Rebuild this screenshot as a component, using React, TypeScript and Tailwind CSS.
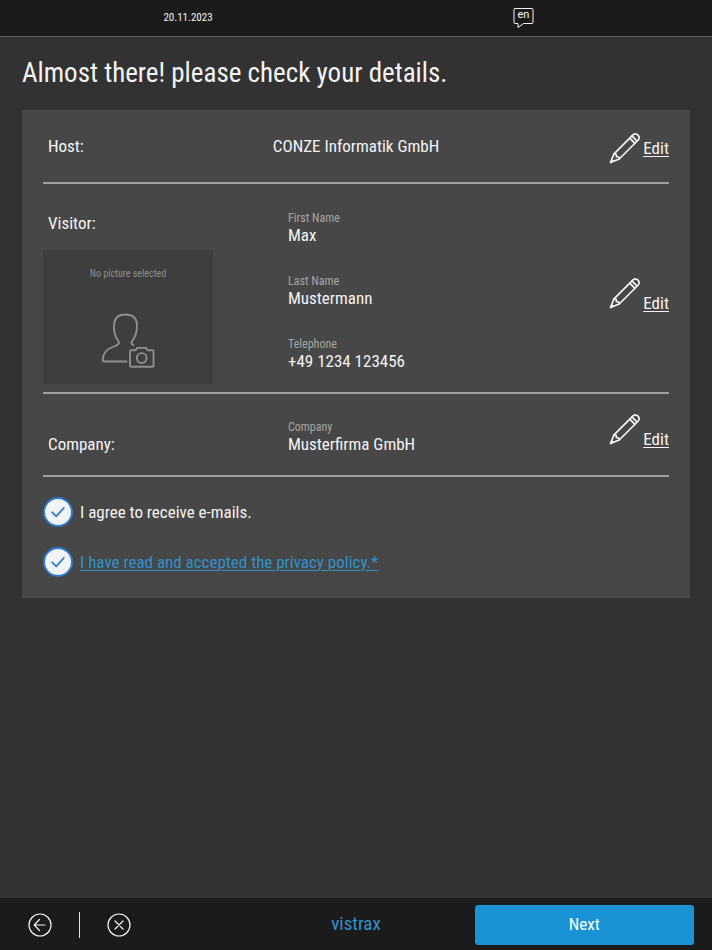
import { useState, type ReactNode } from "react";
import clsx from "clsx";

type Field = {
  label: string;
  value: string;
};

const visitorFields: Field[] = [
  { label: "First Name", value: "Max" },
  { label: "Last Name", value: "Mustermann" },
  { label: "Telephone", value: "+49 1234 123456" },
];

function PencilIcon() {
  return (
    <svg
      className="h-8 w-8"
      viewBox="0 0 32 32"
      fill="none"
      stroke="currentColor"
      strokeWidth="1.7"
      strokeLinejoin="round"
      strokeLinecap="round"
      aria-hidden="true"
    >
      <path d="M1.600 30.400 5 21.800 24 2.800a3.700 3.700 0 0 1 5.200 5.200L10.200 27z" />
      <path d="M5 21.800c2.700 0 2.400 1.500 2.400 2.800 1.300 0 2.800-.3 2.800 2.400M20.700 6.100l5.200 5.200M22.900 3.900l5.200 5.200M1.600 30.400l1.800-1.800" />
    </svg>
  );
}

function PersonCameraIcon() {
  return (
    <svg
      className="h-14 w-14"
      viewBox="0 0 56 56"
      fill="none"
      stroke="currentColor"
      strokeWidth="1.9"
      strokeLinejoin="round"
      strokeLinecap="round"
      aria-hidden="true"
    >
      <path d="M26.500 49.500H4.500c-1.200 0-1.900-.7-1.800-1.900.5-7.800 4.800-10.800 11-12.900 3.800-1.300 5.300-2.300 5.300-4.700-3.300-4-5-9.500-5-15.500C14 6.500 18 2.500 25.500 2.500S37 6.500 37 14c0 6-1.800 11.400-5.300 15.500-.5 2 .2 3 1.800 3.700" />
      <path d="M31 38.300h4.500l1.600-2.400h8.800l1.600 2.400h5a1 1 0 0 1 1 1v14.500a1 1 0 0 1-1 1H31a1 1 0 0 1-1-1V39.300a1 1 0 0 1 1-1z" />
      <circle cx="41.700" cy="46" r="4.900" />
    </svg>
  );
}

function EditButton({ compact = false }: { compact?: boolean }) {
  return (
    <button
      type="button"
      className={clsx(
        "flex cursor-pointer gap-0.5 justify-self-end",
        compact ? "items-center" : "items-start pb-[5px]",
      )}
    >
      <PencilIcon />
      <span
        className={clsx(
          "text-[17px] leading-5 underline decoration-1 underline-offset-2",
          !compact && "pt-4",
        )}
      >
        Edit
      </span>
    </button>
  );
}

function FieldItem({ label, value }: Field) {
  return (
    <div>
      <dt className="text-xs leading-[14px] text-[#a5a5a5]">{label}</dt>
      <dd className="text-[17px] leading-5">{value}</dd>
    </div>
  );
}

function Consent({ id, children }: { id: string; children: ReactNode }) {
  const [checked, setChecked] = useState(true);

  return (
    <div className="flex items-center gap-[7px]">
      <div className="grid place-items-center *:col-start-1 *:row-start-1">
        <input
          id={id}
          type="checkbox"
          checked={checked}
          onChange={(e) => setChecked(e.target.checked)}
          className="h-[30px] w-[30px] appearance-none rounded-full border-2 border-[#2d7ad2] bg-[#f2f3f5]"
        />
        {checked && (
          <svg
            className="pointer-events-none h-4 w-4"
            viewBox="0 0 16 16"
            fill="none"
            stroke="#2d7ad2"
            strokeWidth="1.8"
            strokeLinecap="round"
            strokeLinejoin="round"
            aria-hidden="true"
          >
            <path d="m2.200 8.300 4 4 7.600-8.300" />
          </svg>
        )}
      </div>
      <label htmlFor={id} className="text-[17px] leading-5">
        {children}
      </label>
    </div>
  );
}

export default function App() {
  return (
    <div className="flex min-h-screen flex-col bg-[#323232] font-['Roboto_Condensed',Roboto,sans-serif] text-[#f4f4f4]">
      {/* Top bar */}
      <header className="grid h-[37px] grid-cols-2 items-center border-b border-[#606060] bg-[#1b1b1b] px-5">
        <time dateTime="2023-11-20" className="text-center text-[11px]">
          20.11.2023
        </time>
        <button
          type="button"
          aria-label="Language: en"
          className="cursor-pointer justify-self-center"
        >
          <svg className="h-6 w-6" viewBox="0 0 24 24" aria-hidden="true">
            <path
              d="M3 2.500h17a1 1 0 0 1 1 1v13a1 1 0 0 1-1 1h-8.500l-5.500 4v-4H3a1 1 0 0 1-1-1v-13a1 1 0 0 1 1-1z"
              fill="none"
              stroke="currentColor"
              strokeLinejoin="round"
            />
            <text
              x="11.500"
              y="12"
              textAnchor="middle"
              fill="currentColor"
              className="font-['Roboto',sans-serif] text-[11px]"
            >
              en
            </text>
          </svg>
        </button>
      </header>

      <main className="flex-1 px-[22px] pt-5">
        <h1 className="text-[27px] leading-8">
          Almost there! please check your details.
        </h1>

        <div className="mt-[21px] bg-[#474747] px-[21px] pb-[21px]">
          {/* Host */}
          <section className="grid grid-cols-[1fr_auto_1fr] items-start border-b-2 border-[#a0a0a0] pt-[22px] pb-[18px]">
            <h2 className="pt-1 pl-[5px] text-[17px] leading-5">Host:</h2>
            <p className="pt-1 text-[17px] leading-5">CONZE Informatik GmbH</p>
            <EditButton compact />
          </section>

          {/* Visitor */}
          <section className="grid grid-cols-[245px_1fr_auto] items-center border-b-2 border-[#a0a0a0] pt-[27px] pb-2">
            <div>
              <h2 className="pl-[5px] text-[17px] leading-6">Visitor:</h2>
              <div className="mt-[15px] flex h-[134px] w-[170px] flex-col items-center justify-between bg-[#3e3e3e] py-4 text-[#8f8f8f]">
                <p className="text-[10px] leading-4">No picture selected</p>
                <PersonCameraIcon />
              </div>
            </div>
            <dl className="flex flex-col gap-[29px] self-start">
              {visitorFields.map((field) => (
                <FieldItem key={field.label} {...field} />
              ))}
            </dl>
            <EditButton />
          </section>

          {/* Company */}
          <section className="grid grid-cols-[245px_1fr_auto] items-end border-b-2 border-[#a0a0a0] pt-[19px] pb-[21px]">
            <h2 className="pl-[5px] text-[17px] leading-5">Company:</h2>
            <dl>
              <FieldItem label="Company" value="Musterfirma GmbH" />
            </dl>
            <EditButton />
          </section>

          {/* Consent */}
          <div className="flex flex-col gap-5 pt-5">
            <Consent id="mails">I agree to receive e-mails.</Consent>
            <Consent id="privacy">
              <a
                href="#privacy-policy"
                className="text-[#3092cb] underline decoration-1 underline-offset-2"
              >
                I have read and accepted the privacy policy.*
              </a>
            </Consent>
          </div>
        </div>
      </main>

      {/* Bottom bar */}
      <footer className="grid h-[52px] grid-cols-3 items-center bg-[#1b1b1b] pt-px">
        <div className="flex items-center gap-[27px] pl-7">
          <button type="button" aria-label="Back" className="cursor-pointer">
            <svg
              className="h-6 w-6"
              viewBox="0 0 24 24"
              fill="none"
              stroke="currentColor"
              strokeWidth="1.2"
              strokeLinecap="round"
              strokeLinejoin="round"
            >
              <circle cx="12" cy="12" r="11" />
              <path d="M17 12H6.500M11.500 6.500 6.200 12l5.300 5.500" />
            </svg>
          </button>
          <span className="h-[26px] w-px bg-[#e0e0e0]" />
          <button type="button" aria-label="Cancel" className="cursor-pointer">
            <svg
              className="h-6 w-6"
              viewBox="0 0 24 24"
              fill="none"
              stroke="currentColor"
              strokeWidth="1.2"
              strokeLinecap="round"
            >
              <circle cx="12" cy="12" r="11" />
              <path d="m8 8 8 8M16 8l-8 8" />
            </svg>
          </button>
        </div>
        <p className="text-center text-[19px] text-[#3092cb]">vistrax</p>
        <button
          type="button"
          className="mr-[18px] h-10 cursor-pointer rounded-[3px] bg-[#1993d5] text-[17px] text-white"
        >
          Next
        </button>
      </footer>
    </div>
  );
}
